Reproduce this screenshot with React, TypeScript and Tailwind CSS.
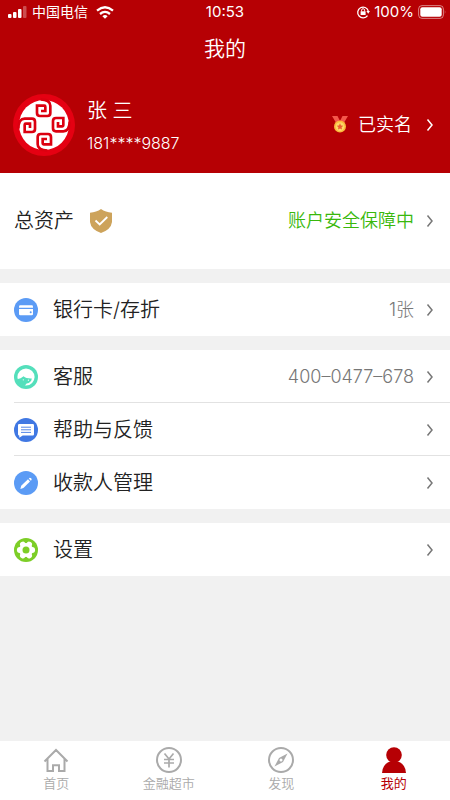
import type { ReactNode } from 'react';

const rowText = 'text-xl font-[350] text-[#222]';

function Chevron({ className = 'text-[#777]' }: { className?: string }) {
  return (
    <svg viewBox="0 0 8 14" className={`h-3.5 w-2 shrink-0 ${className}`} fill="none" stroke="currentColor" strokeWidth="1.5" aria-hidden="true">
      <path d="M1.5 1.5 L6 7 L1.5 12.5" />
    </svg>
  );
}

function BankLogo() {
  return (
    <svg viewBox="-93 -93 186 186" className="size-[62px] shrink-0" fill="none" aria-hidden="true">
      <circle r="93" fill="#e50012" />
      <circle r="75" fill="#fff" />
      {[0, 90, 180, 270].map((angle) => (
        <g key={angle} transform={`rotate(${angle})`}>
          <path d="M-10 -77 Q19 -76 19 -58 V-36 Q19 -27 10 -27 H-12 Q-21 -27 -21 -36 V-58 H1 Q4 -58 4 -55 V-42 H-9" stroke="#dc0010" strokeWidth="8" />
        </g>
      ))}
    </svg>
  );
}

function StatusBar() {
  return (
    <div className="grid h-6 grid-cols-3 items-center px-2 text-sm">
      <div className="flex items-center gap-1">
        <svg viewBox="0 0 20 12" className="h-3 w-5" fill="currentColor" aria-hidden="true">
          <rect x="0" y="8" width="3.5" height="4" rx="1" />
          <rect x="5" y="6" width="3.5" height="6" rx="1" />
          <rect x="10" y="3" width="3.5" height="9" rx="1" />
          <rect x="15" y="0" width="3.5" height="12" rx="1" opacity=".3" />
        </svg>
        <span className="whitespace-nowrap">中国电信</span>
        <svg viewBox="0 0 18 13" className="ml-1 h-[13px] w-[18px]" fill="none" stroke="currentColor" strokeWidth="2.3" aria-hidden="true">
          <path d="M1 4.6 Q9 -2 17 4.6" />
          <path d="M4 8 Q9 3.8 14 8" />
          <path d="M9 12.8 L6.4 10.2 Q9 8 11.6 10.2 Z" fill="currentColor" stroke="none" />
        </svg>
      </div>
      <span className="text-center text-[15px]">10:53</span>
      <div className="-mr-1 flex items-center justify-end gap-1 text-[15px]">
        <svg viewBox="0 0 14 14" className="size-3.5" fill="none" stroke="currentColor" strokeWidth="1.3" aria-hidden="true">
          <path d="M11.5 10.6 A5.4 5.4 0 1 1 12.3 6" />
          <path d="M10.4 6 H14 L12.2 8.7 Z" fill="currentColor" stroke="none" />
          <rect x="4.6" y="6.3" width="5" height="3.7" fill="currentColor" stroke="none" />
          <path d="M5.6 6.5 V5.2 A1.5 1.5 0 0 1 8.6 5.2 V6.5" strokeWidth="1" />
        </svg>
        <span>100%</span>
        <svg viewBox="0 0 28 14" className="h-3.5 w-7" aria-hidden="true">
          <rect x=".6" y=".6" width="24.8" height="12.8" rx="3.4" fill="none" stroke="#fff" strokeOpacity=".5" />
          <rect x="2.3" y="2.3" width="21.4" height="9.4" rx="2" fill="#fff" />
          <path d="M26.8 5 Q28 7 26.8 9 Z" fill="#fff" opacity=".5" />
        </svg>
      </div>
    </div>
  );
}

function MedalIcon() {
  return (
    <svg viewBox="0 0 16 17" className="h-[17px] w-4" aria-hidden="true">
      <path d="M0 0 H5.5 L8 5 L4.5 7.5 Z" fill="#f4574b" />
      <path d="M16 0 H10.5 L8 5 L11.5 7.5 Z" fill="#f4574b" />
      <circle cx="8" cy="10.6" r="6" fill="#fbb83d" />
      <circle cx="8" cy="10.6" r="4.4" fill="#fdd866" />
      <path d="M8 7.3 l1 2.1 2.3 .3 -1.7 1.6 .4 2.3 -2 -1.1 -2 1.1 .4 -2.3 -1.7 -1.6 2.3 -.3Z" fill="#ee5a33" />
    </svg>
  );
}

function ShieldIcon() {
  return (
    <svg viewBox="0 0 22 24" className="h-6 w-[22px]" aria-hidden="true">
      <path d="M11 0 Q15.5 3.3 22 3.8 V13 Q21 20.5 11 24 Q1 20.5 0 13 V3.8 Q6.5 3.3 11 0Z" fill="#cda35b" />
      <path d="M5.5 11.5 L9.7 15.5 L17.3 8" fill="none" stroke="#fff" strokeWidth="1.8" />
    </svg>
  );
}

function CircleIcon({ color, children }: { color: string; children: ReactNode }) {
  return (
    <svg viewBox="0 0 24 24" className="size-6 shrink-0" fill="none" aria-hidden="true">
      <circle cx="12" cy="12" r="12" fill={color} />
      {children}
    </svg>
  );
}

const cardIcon = (
  <CircleIcon color="#5b9bf5">
    <path d="M5 9.8 V8.6 Q5 7.3 6.3 7.3 H17.7 Q19 7.3 19 8.6 V9.8Z" fill="#fff" />
    <path d="M5 11 H19 V16 Q19 17.2 17.7 17.2 H6.3 Q5 17.2 5 16Z" fill="#fff" />
    <circle cx="16.7" cy="14.3" r="1" fill="#5b9bf5" />
  </CircleIcon>
);

const serviceIcon = (
  <CircleIcon color="#54dfbb">
    <circle cx="12" cy="12" r="8.6" fill="#fff" />
    <path d="M3 14.2 Q7 13.6 9.6 11.2 Q12 13.6 17.8 13.4 Q17.4 17.6 12.6 18.4 L10.5 21 Q4.5 19.6 3 14.2Z" fill="#54dfbb" />
    <circle cx="9.3" cy="14.8" r=".6" fill="#fff" />
    <circle cx="14.4" cy="15.2" r=".6" fill="#fff" />
  </CircleIcon>
);

const feedbackIcon = (
  <CircleIcon color="#4078e3">
    <path d="M5.2 6 H18.8 Q20 6 20 7.2 V16.2 Q20 17.4 18.8 17.4 H8.7 L5.3 19.7 V17.4 Q4 17.4 4 16.2 V7.2 Q4 6 5.2 6Z" fill="#fff" />
    <path d="M7 9.2 H17 M7 11.8 H17 M7 14.4 H17" stroke="#4078e3" strokeWidth=".9" />
  </CircleIcon>
);

const penIcon = (
  <CircleIcon color="#5b9bf5">
    <path d="M6.4 18 L7.2 14.8 L14 8.3 L16 10.4 L9.4 16.9Z" fill="#fff" />
    <path d="M14.8 7.6 L15.8 6.7 Q17.8 6.8 17.7 8.8 L16.8 9.7Z" fill="#fff" />
  </CircleIcon>
);

const gearIcon = (
  <CircleIcon color="#7dce27">
    <g fill="#fff">
      <circle cx="12" cy="12" r="6.9" />
      {[0, 60, 120, 180, 240, 300].map((angle) => (
        <circle key={angle} cx="18.2" cy="12" r="2.9" transform={`rotate(${angle} 12 12)`} />
      ))}
    </g>
    <circle cx="12" cy="12" r="3.5" fill="#7dce27" />
  </CircleIcon>
);

type Item = { label: string; icon: ReactNode; value?: string };

const groups: Item[][] = [
  [{ label: '银行卡/存折', icon: cardIcon, value: '1张' }],
  [
    { label: '客服', icon: serviceIcon, value: '400–0477–678' },
    { label: '帮助与反馈', icon: feedbackIcon },
    { label: '收款人管理', icon: penIcon },
  ],
  [{ label: '设置', icon: gearIcon }],
];

function MenuGroup({ items }: { items: Item[] }) {
  return (
    <ul className="divide-y divide-[#e2e2e2] bg-white pl-3.5">
      {items.map(({ label, icon, value }) => (
        <li key={label} className="h-[53px]">
          <button type="button" className="flex h-full w-full items-center pt-px pr-4 text-left">
            {icon}
            <span className={`ml-[15px] flex-1 ${rowText}`}>{label}</span>
            {value && <span className="text-lg font-light text-[#777]">{value}</span>}
            <Chevron className="ml-3 text-[#777]" />
          </button>
        </li>
      ))}
    </ul>
  );
}

const tabs = [
  {
    label: '首页',
    icon: <path d="M1.5 14.5 L13 3 L24.5 14.5 M4.5 12 V24 H10 V18.3 H16 V24 H21.5 V12" />,
  },
  {
    label: '金融超市',
    icon: (
      <>
        <circle cx="13" cy="13" r="12" />
        <path d="M8.5 6.5 L13 12 L17.5 6.5 M13 12 V20.5 M8 12.5 H18 M8 16 H18" strokeWidth="1.7" />
      </>
    ),
  },
  {
    label: '发现',
    icon: (
      <>
        <circle cx="13" cy="13" r="12" />
        <path d="M19.5 6.5 L15 15 L6.5 19.5 L11 11Z" fill="currentColor" stroke="none" />
        <circle cx="13" cy="13" r="1.5" fill="#fff" stroke="none" />
      </>
    ),
  },
  {
    label: '我的',
    active: true,
    icon: (
      <g fill="currentColor" stroke="none">
        <circle cx="13" cy="8" r="7.8" />
        <path d="M1 26 Q1.3 17.5 9 14.5 H17 Q24.7 17.5 25 26Z" />
      </g>
    ),
  },
];

export default function App() {
  return (
    <div className="flex min-h-screen flex-col bg-[#f1f1f1] font-[Inter,'Noto_Sans_CJK_SC',sans-serif]">
      <header className="bg-[#b60004] text-white">
        <StatusBar />
        <h1 className="h-12 text-center text-[21px] leading-[50px] font-[350]">我的</h1>
        <div className="flex h-[101px] items-center pt-1 pl-[13px] pr-4">
          <BankLogo />
          <div className="ml-3 flex-1 pt-1">
            <p className="text-xl leading-8 font-[350]">张 三</p>
            <p className="text-base leading-8 font-light">181****9887</p>
          </div>
          <button type="button" className="flex items-center">
            <MedalIcon />
            <span className="ml-2.5 text-lg font-[350]">已实名</span>
            <Chevron className="ml-3.5 text-white" />
          </button>
        </div>
      </header>

      <main className="flex flex-1 flex-col gap-3.5">
        <button type="button" className="flex h-24 w-full items-center bg-white pr-4 pl-3.5 text-left">
          <span className={rowText}>总资产</span>
          <span className="ml-4 flex-1">
            <ShieldIcon />
          </span>
          <span className="text-lg font-[350] text-[#39b80c]">账户安全保障中</span>
          <Chevron className="ml-3 text-[#777]" />
        </button>
        {groups.map((items) => (
          <MenuGroup key={items[0].label} items={items} />
        ))}
      </main>

      <nav className="grid h-[59px] grid-cols-4 bg-white">
        {tabs.map(({ label, icon, active }) => (
          <a
            key={label}
            href="#"
            className={`flex flex-col items-center pt-1.5 text-[13px] leading-5 ${active ? 'text-[#b60004]' : 'font-[350] text-[#aaa]'}`}
          >
            <svg viewBox="0 0 26 26" className="size-[26px]" fill="none" stroke="currentColor" strokeWidth="2" aria-hidden="true">
              {icon}
            </svg>
            <span>{label}</span>
          </a>
        ))}
      </nav>
    </div>
  );
}
